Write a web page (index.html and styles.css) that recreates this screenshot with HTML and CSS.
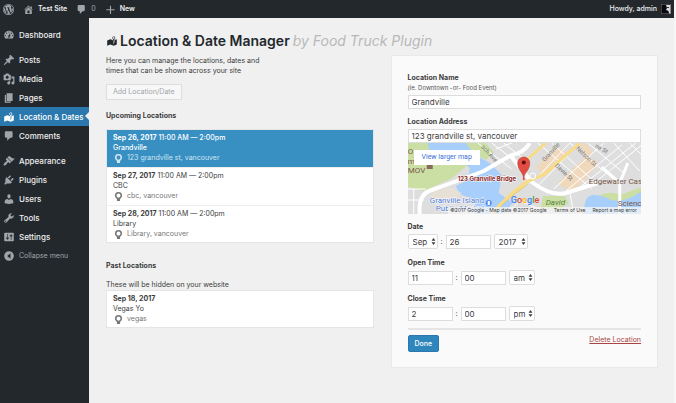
FILE: index.html
```html
<!DOCTYPE html>
<html lang="en">
<head>
<meta charset="utf-8">
<title>Location &amp; Date Manager</title>
<link rel="stylesheet" href="styles.css">
</head>
<body>
<svg class="defs" width="0" height="0" aria-hidden="true">
  <symbol id="i-map" viewBox="0 0 20 20"><path d="M13 13.140l1.170-5.940c.79-.43 1.330-1.250 1.330-2.200 0-1.380-1.120-2.500-2.500-2.500S10.500 3.620 10.500 5c0 .95.54 1.770 1.330 2.200zm0-9.640c.83 0 1.500.67 1.500 1.500s-.67 1.500-1.500 1.500-1.500-.67-1.500-1.500.67-1.500 1.500-1.500zm1.720 4.800L18 6.970v9L13.120 18 7 15.970l-5 2v-9l5-2 4.270 1.410 1.730 7.300z"/></symbol>
  <symbol id="i-comment" viewBox="0 0 20 20"><path d="M5 2h9c1.100 0 2 .9 2 2v7c0 1.100-.9 2-2 2h-2l-5 5v-5H5c-1.100 0-2-.9-2-2V4c0-1.100.9-2 2-2z"/></symbol>
  <symbol id="i-pin" viewBox="0 0 20 20"><path fill-rule="evenodd" d="M10 0a8 8 0 0 1 8 7.500c0 3.500-2.500 5-4.500 8V20h-7v-4.500C4.500 12.500 2 11 2 7.500A8 8 0 0 1 10 0zm0 3.500a4.500 4.500 0 1 0 0 9 4.500 4.500 0 0 0 0-9z"/></symbol>
  <symbol id="i-sort" viewBox="0 0 6 10"><path d="M3 0l2.800 4H.2zM3 10L.2 6h5.600z"/></symbol>
</svg>

<header class="adminbar">
  <a href="#" class="bar-item" aria-label="WordPress"><svg viewBox="0 0 20 20"><path fill-rule="evenodd" d="M10 0a10 10 0 1 1 0 20 10 10 0 0 1 0-20zm0 1.200a8.800 8.800 0 1 0 0 17.600 8.800 8.800 0 0 0 0-17.600z"/><path d="M2.600 6.500l4 11A8 8 0 0 1 2.600 6.500zM3.500 5a8 8 0 0 1 12-1c-1.500.5-1.500 2-.5 3.500 1 1.600 1 3-.1 5.700L13.800 16 10.700 6.500h1.300v-.8H6.800v.8h1.300l1.300 3.600-1.800 5.600L4.500 6.500h1.300v-.8H3.200zM10.100 11l2.500 6.800a8 8 0 0 1-4.800.1zM17 6.500a8 8 0 0 1-3 10.300l2.400-7z"/></svg></a>
  <a href="#" class="bar-item"><svg viewBox="0 0 20 20"><path d="M16 8.500l1.530 1.530-1.060 1.060L10 4.600l-6.470 6.490-1.060-1.060L10 2.500l4 4v-2h2v4zm-6-2.460l6 5.990V18H4v-5.970zM12 17v-5H8v5h4z"/></svg>Test Site</a>
  <a href="#" class="bar-item muted" aria-label="0 comments"><svg><use href="#i-comment"/></svg>0</a>
  <a href="#" class="bar-item"><svg viewBox="0 0 20 20"><path d="M9 3h2v6.500h6.500v2H11V18H9v-6.500H2.500v-2H9z"/></svg>New</a>
  <a href="#" class="bar-item account">Howdy, admin<svg class="avatar" viewBox="0 0 10 10"><path fill="#77777f" d="M0 0h10v10H0z"/><path fill="#08080c" d="M.5.5h9v9h-9z"/><path fill="#d9d9df" d="M5 1h4.500v8.500H8L7.500 7 5 6l1-2z"/><path fill="#333" d="M6 3h2v1H6z"/></svg></a>
</header>

<div class="shell">
  <nav class="sidebar" aria-label="Main menu">
    <ul>
      <li><a href="#"><svg viewBox="0 0 20 20"><path d="M3.760 16h12.480c1.100-1.370 1.760-3.110 1.760-5 0-4.420-3.580-8-8-8s-8 3.580-8 8c0 1.890.66 3.630 1.760 5zM10 4c.55 0 1 .45 1 1s-.45 1-1 1-1-.45-1-1 .45-1 1-1zM6 6c.55 0 1 .45 1 1s-.45 1-1 1-1-.45-1-1 .45-1 1-1zm8 0c.55 0 1 .45 1 1s-.45 1-1 1-1-.45-1-1 .45-1 1-1zm-5.370 5.550L12 7v6c0 1.100-.9 2-2 2s-2-.9-2-2c0-.57.24-1.080.63-1.450zM4 10c.55 0 1 .45 1 1s-.45 1-1 1-1-.45-1-1 .45-1 1-1zm12 0c.55 0 1 .45 1 1s-.45 1-1 1-1-.45-1-1 .45-1 1-1zm-5 3c0-.55-.45-1-1-1s-1 .45-1 1 .45 1 1 1 1-.45 1-1z" fill-rule="evenodd"/></svg>Dashboard</a></li>
    </ul>
    <ul>
      <li><a href="#"><svg viewBox="0 0 20 20"><path d="M10.440 3.020l1.820-1.820 6.360 6.350-1.830 1.820c-1.050-.68-2.480-.57-3.410.36l-.75.75c-.92.93-1.040 2.350-.35 3.410l-1.830 1.820-2.410-2.410-2.800 2.790c-.42.42-3.380 2.710-3.800 2.290s1.860-3.390 2.280-3.810l2.790-2.790L4.100 9.360l1.830-1.820c1.050.69 2.480.57 3.400-.36l.75-.75c.93-.92 1.050-2.350.36-3.410z"/></svg>Posts</a></li>
      <li><a href="#"><svg viewBox="0 0 20 20"><path fill-rule="evenodd" d="M13 11V4c0-.55-.45-1-1-1h-1.670L9 1H5L3.670 3H2c-.55 0-1 .45-1 1v7c0 .55.45 1 1 1h10c.55 0 1-.45 1-1zM7 4.500c1.380 0 2.500 1.120 2.500 2.500S8.380 9.500 7 9.500 4.500 8.380 4.500 7 5.620 4.500 7 4.500zM14 6h5v10.500c0 1.380-1.120 2.500-2.500 2.500S14 17.880 14 16.500s1.120-2.500 2.500-2.500c.17 0 .34.020.5.050V9h-3V6zm-4 8.050V13h2v3.500c0 1.380-1.120 2.500-2.500 2.500S7 17.880 7 16.500 8.120 14 9.500 14c.17 0 .34.020.5.050z"/></svg>Media</a></li>
      <li><a href="#"><svg viewBox="0 0 20 20"><path d="M6 15V2h10v13H6zm-1 1h8v2H3V5h2v11z"/></svg>Pages</a></li>
      <li><a href="#" class="current" aria-current="page"><svg><use href="#i-map"/></svg>Location &amp; Dates</a></li>
      <li><a href="#"><svg><use href="#i-comment"/></svg>Comments</a></li>
    </ul>
    <ul>
      <li><a href="#"><svg viewBox="0 0 20 20"><path d="M14.480 11.060L7.410 3.990l1.500-1.500c.5-.56 2.300-.47 3.510.32 1.210.8 1.430 1.280 2.910 2.100 1.180.64 2.450 1.260 4.450.85zm-.71.71L6.700 4.700 4.930 6.470c-.39.39-.39 1.020 0 1.410l1.060 1.060c.39.39.39 1.030 0 1.420-.6.6-1.430 1.110-2.210 1.690-.35.26-.7.53-1.010.84C1.430 14.230.4 16.080 1.400 17.070c.99 1 2.840-.03 4.180-1.360.31-.31.58-.66.85-1.020.57-.78 1.080-1.610 1.690-2.210.39-.39 1.020-.39 1.410 0l1.060 1.060c.39.39 1.020.39 1.410 0z"/></svg>Appearance</a></li>
      <li><a href="#"><svg viewBox="0 0 20 20"><path d="M13.110 4.360L9.870 7.600 8 5.730l3.240-3.240c.35-.34 1.050-.2 1.560.32.52.51.66 1.210.31 1.550zm-8 1.770l.91-1.120 9.010 9.010-1.190.84c-.71.71-2.630 1.160-3.820 1.160H6.140L4.900 17.260c-.59.59-1.540.59-2.120 0-.59-.58-.59-1.530 0-2.120l1.240-1.240v-3.880c0-1.130.4-3.190 1.090-3.890zm7.260 3.970l3.240-3.240c.34-.35 1.040-.21 1.550.31.52.51.66 1.210.31 1.550l-3.240 3.250z"/></svg>Plugins</a></li>
      <li><a href="#"><svg viewBox="0 0 20 20"><path d="M10 9.250c-2.270 0-2.730-3.440-2.730-3.440C7 4.020 7.820 2 9.970 2c2.160 0 2.980 2.020 2.710 3.810 0 0-.41 3.440-2.680 3.440zm0 2.570L12.720 10c2.390 0 4.520 2.330 4.520 4.530v2.490s-3.650 1.130-7.240 1.130c-3.650 0-7.240-1.130-7.240-1.130v-2.490c0-2.250 1.940-4.480 4.470-4.480z"/></svg>Users</a></li>
      <li><a href="#"><svg viewBox="0 0 20 20"><path fill-rule="evenodd" d="M16.680 9.770c-1.340 1.340-3.300 1.670-4.950.99l-5.410 6.520c-.99.99-2.590.99-3.580 0s-.99-2.590 0-3.570l6.520-5.420c-.68-1.650-.35-3.610.99-4.950 1.280-1.280 3.120-1.620 4.720-1.060l-2.890 2.890 2.820 2.820 2.860-2.870c.53 1.580.18 3.390-1.080 4.650zM3.810 16.210c.4.390 1.040.39 1.430 0 .4-.4.4-1.040 0-1.430-.39-.4-1.030-.4-1.430 0-.39.39-.39 1.030 0 1.430z"/></svg>Tools</a></li>
      <li><a href="#"><svg viewBox="0 0 20 20"><path fill-rule="evenodd" d="M18 16V4c0-.55-.45-1-1-1H3c-.55 0-1 .45-1 1v12c0 .55.45 1 1 1h14c.55 0 1-.45 1-1zM8 11h1c.55 0 1 .45 1 1s-.45 1-1 1H8v1.500c0 .28-.22.5-.5.5s-.5-.22-.5-.5V13H6c-.55 0-1-.45-1-1s.45-1 1-1h1V5.500c0-.28.22-.5.5-.5s.5.22.5.5V11zm5-2h-1c-.55 0-1-.45-1-1s.45-1 1-1h1V5.500c0-.28.22-.5.5-.5s.5.22.5.5V7h1c.55 0 1 .45 1 1s-.45 1-1 1h-1v5.500c0 .28-.22.5-.5.5s-.5-.22-.5-.5V9z"/></svg>Settings</a></li>
      <li><button type="button" class="collapse"><svg viewBox="0 0 20 20"><path fill-rule="evenodd" d="M10 2a8 8 0 1 1 0 16 8 8 0 0 1 0-16zm2.500 3.500L7 10l5.500 4.500z"/></svg>Collapse menu</button></li>
    </ul>
  </nav>

  <main class="content">
    <h1><svg><use href="#i-map"/></svg>Location &amp; Date Manager <em>by Food Truck Plugin</em></h1>
    <div class="columns">
      <section class="listing">
        <p class="intro">Here you can manage the locations, dates and times that can be shown across your site</p>
        <button type="button" class="add">Add Location/Date</button>
        <h2>Upcoming Locations</h2>
        <ul class="locations">
          <li class="selected"><div><b>Sep 26, 2017</b> 11:00 AM — 2:00pm</div><div>Grandville</div><div class="place"><svg><use href="#i-pin"/></svg>123 grandville st, vancouver</div></li>
          <li><div><b>Sep 27, 2017</b> 11:00 AM — 2:00pm</div><div>CBC</div><div class="place"><svg><use href="#i-pin"/></svg>cbc, vancouver</div></li>
          <li><div><b>Sep 28, 2017</b> 11:00 AM — 2:00pm</div><div>Library</div><div class="place"><svg><use href="#i-pin"/></svg>Library, vancouver</div></li>
        </ul>
        <h2 class="past">Past Locations</h2>
        <p>These will be hidden on your website</p>
        <ul class="locations">
          <li><div><b>Sep 18, 2017</b></div><div>Vegas Yo</div><div class="place"><svg><use href="#i-pin"/></svg>vegas</div></li>
        </ul>
      </section>

      <form class="panel">
        <label for="name">Location Name</label>
        <small>(ie. Downtown -or- Food Event)</small>
        <input id="name" type="text" value="Grandville">
        <label for="address" class="gap">Location Address</label>
        <input id="address" type="text" value="123 grandville st, vancouver">
        <div class="map">
          <svg class="map-art" viewBox="0 0 234 71" preserveAspectRatio="xMidYMid slice" role="img" aria-label="Map of 123 Granville Bridge">
            <path fill="#dedede" d="M0 0h234v71H0z"/>
            <path fill="#cbdfa4" d="M0 0h72l-12 22-17 14L16 48 0 44z"/>
            <path fill="#a8cefb" d="M20 0h42l6 12 14 8 12 12-3 18 14 10-10 11H66l2-14-16-6-4-8 12-6 2-12-12-10-28-6z"/>
            <path fill="#cbdfa4" d="M58 0h20l8 9-8 8-12-7zM135 53h22l4 7-8 6h-20z"/>
            <path fill="#cbdfa4" d="M147 10l6 3-2 7-7-3z"/>
            <path fill="#e6e0d6" d="M24 50l16-6 14 6-10 8H22z"/>
            <path fill="#f0d8bd" d="M128 24l22-20 8 6-22 24zM150 40l30-28 11 9-24 26-9-1zM172 2l6-2 8 10-8 4z"/>
            <path fill="#cbdfa4" d="M190 53q14-6 22-1l22-8v27l-30-4z"/>
            <path fill="#a8cefb" d="M177 71q-2-18 8-19 10 0 18 5 16 3 31-9v23z"/>
            <g fill="none" stroke="#fff">
              <path stroke-width="4" d="M12 71q-2-20 12-24Q66 32 76 28q20-12 28-16 12-2 18-12M104 14l20 25q20 15 34 11l32-10"/>
              <path stroke-width="3" d="M212 71V40l-18-16M212 40l8-20"/>
              <path stroke-width="1" d="M0 46h18M0 57h16M6 46v25M70 0l34 26M84 0l26 20M88 6l16-6M96 0l20 16M130 0l54 46M144 0l44 40M162 0l46 38M180 0l36 30M206 0l26 28M128 36L162 0M130 43L172 0M146 46L196 0M158 48L214 2M170 46L228 0M184 42l50-40M222 0l12 12M104 66l8-8 20 8M162 49l4 22"/>
            </g>
            <path fill="none" stroke="#f7dc85" stroke-width="3" d="M84 71q10-12 22-22l12-10 10-4q12-4 20-14L172 0M118 39l-8 8M120 16L138 0"/>
            <path fill="none" stroke="#e6c96b" stroke-width="1" d="M86 71q10-12 22-21l12-9"/>
            <circle cx="125" cy="33" r="3" fill="#dedede" stroke="#fff"/>
            <g class="street"><text transform="translate(137 19)rotate(-48)">Granville</text><text transform="translate(147 23)rotate(44)">Davie St</text><text transform="translate(168 6)rotate(44)">Nelson St</text><text transform="translate(187 4)rotate(30)">ne St</text><text transform="translate(73 4)rotate(48)">ach Ave</text></g>
            <g class="poi"><text x="0" y="11">O</text><text x="0" y="21">m</text><text x="0" y="30">MOV</text><text x="181" y="41">Edgewater Cas</text><text x="210" y="63">Scienc</text></g>
            <path fill="#8b6a59" d="M19 22l3-2 3 2v4h-6z"/>
            <g class="isle"><text x="22" y="60">Granville Island</text><text x="28" y="68">Public Market</text></g>
            <circle cx="81" cy="60" r="3" fill="#5b8def"/><path fill="#fff" d="M80 58h2v4h-2z"/>
            <text class="district" x="138" y="62">David</text>
            <text class="logo" x="103" y="60"><tspan fill="#4285f4">G</tspan><tspan fill="#ea4335">o</tspan><tspan fill="#fbbc05">o</tspan><tspan fill="#4285f4">g</tspan><tspan fill="#34a853">l</tspan><tspan fill="#ea4335">e</tspan></text>
            <text class="marker-label" x="50" y="38">123 Granville Bridge</text>
            <circle cx="116" cy="36" r="1" fill="#d33"/>
            <path fill="#e44c42" stroke="#b23a30" stroke-width=".6" d="M116 35c-.8-6-6-8-6-15a6 6 0 0 1 12 0c0 7-5.200 9-6 15z"/><circle cx="116" cy="19.500" r="2" fill="#5a110d"/>
          </svg>
          <a href="#" class="larger">View larger map</a>
          <div class="credits"><span>©2017 Google - Map data ©2017 Google</span><a href="#">Terms of Use</a><a href="#">Report a map error</a></div>
        </div>

        <label for="month" class="gap">Date</label>
        <div class="row"><span class="pick"><select id="month"><option>Sep</option></select><svg><use href="#i-sort"/></svg></span><i>:</i><input type="text" value="26" aria-label="Day"><span class="pick year"><select aria-label="Year"><option>2017</option></select><svg><use href="#i-sort"/></svg></span></div>
        <label for="open" class="gap">Open Time</label>
        <div class="row"><input id="open" type="text" value="11"><i>:</i><input type="text" value="00" aria-label="Open minutes"><span class="pick half"><select aria-label="Open am or pm"><option>am</option></select><svg><use href="#i-sort"/></svg></span></div>
        <label for="close" class="gap">Close Time</label>
        <div class="row"><input id="close" type="text" value="2"><i>:</i><input type="text" value="00" aria-label="Close minutes"><span class="pick half"><select aria-label="Close am or pm"><option>pm</option></select><svg><use href="#i-sort"/></svg></span></div>
        <div class="actions"><button type="button" class="done">Done</button><a href="#">Delete Location</a></div>
      </form>
    </div>
  </main>
</div>
</body>
</html>
```

FILE: styles.css
```css
* { box-sizing: border-box; }
body {
  margin: 0;
  min-height: 100vh;
  display: flex;
  flex-direction: column;
  background: #f0f0f0;
  border-right: 2px solid #f6f6f6;
  color: #3c3c3c;
  font: 7px/10px Inter, "Liberation Sans", sans-serif;
}
button, input, select { font: inherit; color: inherit; margin: 0; }
ul { list-style: none; margin: 0; padding: 0; }
p, h1, h2 { margin: 0; }
a { color: inherit; text-decoration: none; }
svg { fill: currentColor; flex: none; }
.defs { position: absolute; }

.adminbar {
  display: flex;
  align-items: center;
  height: 18px;
  padding: 0 3px;
  gap: 9px;
  background: #23282d;
  color: #eee;
  font-weight: 600;
}
.bar-item { display: flex; align-items: center; gap: 4px; }
.bar-item svg { width: 11px; height: 11px; color: #a0a5aa; }
.bar-item.muted { color: #a0a5aa; font-weight: 400; }
.bar-item.account { margin-left: auto; font-weight: 500; }
.bar-item .avatar { width: 10px; height: 10px; }

.shell { flex: 1; display: flex; }
.sidebar {
  flex: none;
  width: 89px;
  padding-top: 7px;
  background: #23282d;
  color: #eee;
  font-size: 8px;
  font-weight: 500;
}
.sidebar ul { margin-bottom: 6px; }
.sidebar a, .collapse {
  position: relative;
  display: flex;
  align-items: center;
  gap: 4px;
  width: 100%;
  height: 19px;
  padding: 0 0 0 3px;
  white-space: nowrap;
}
.sidebar svg { width: 12px; height: 12px; color: #a0a5aa; }
.sidebar .current { background: #2a78ad; color: #fff; }
.sidebar .current svg { color: #fff; }
.current::after {
  content: "";
  position: absolute;
  right: 0;
  top: 5px;
  border: 4px solid transparent;
  border-right-color: #f0f0f0;
  border-left: 0;
}
.collapse { border: 0; background: none; color: #a0a5aa; font-size: 7px; font-weight: 400; }

.content { flex: 1; min-width: 0; padding: 13px 16px 0 17px; }
h1 {
  display: flex;
  align-items: center;
  height: 20px;
  color: #23282d;
  font-size: 14px;
  line-height: 20px;
  font-weight: 600;
  white-space: nowrap;
}
h1 svg { width: 12px; height: 12px; margin-right: 2px; }
h1 em { margin-left: 3px; color: #b8b8b8; font-weight: 400; }
.columns {
  display: grid;
  grid-template-columns: 1fr 1fr;
  align-items: start;
  gap: 17px;
  padding-top: 4px;
}
.intro { max-width: 170px; padding-top: 1px; }
.add {
  display: block;
  height: 16px;
  margin-top: 8px;
  padding: 0 6px;
  border: 1px solid #ddd;
  border-radius: 1px;
  background: #f7f7f7;
  color: #a0a5aa;
}
h2 { font-size: 7px; line-height: 10px; font-weight: 700; margin: 11px 0 8px; }
.past { margin: 18px 0 9px; }
.locations { background: #fff; border: 1px solid #e5e5e5; }
.locations li { padding: 3px 6px 4px; }
.locations li:last-child { padding-bottom: 3px; }
.locations li + li { border-top: 1px solid #eee; }
.locations b { font-weight: 700; }
.locations .selected { background: #388fc2; color: #fff; font-weight: 500; }
.locations .place { display: flex; align-items: center; gap: 4px; padding-left: 1px; color: #777; font-weight: 400; }
.place svg { width: 9px; height: 9px; }
.locations .selected .place { color: #cfe5f2; }

.panel {
  padding: 17px 16px 15px;
  background: #fafafa;
  border: 1px solid #e9e9e9;
}
.panel label { display: block; font-weight: 700; }
.panel .gap { margin-top: 8px; }
.panel .row + .gap { margin-top: 9px; }
.panel small { display: block; font-size: 6px; line-height: 10px; color: #555; }
.panel input {
  display: block;
  width: 100%;
  height: 14px;
  margin-top: 2px;
  padding: 0 3px;
  border: 1px solid #ddd;
  background: #fff;
  font-size: 8px;
}
.map { position: relative; overflow: hidden; height: 71px; font-family: Roboto, "Liberation Sans", sans-serif; }
.map-art { display: block; width: 100%; height: 71px; }
.street { font-size: 6px; fill: #777; }
.poi { font-size: 8px; fill: #77594a; }
.isle { font-size: 8px; fill: #4a78d0; stroke: #fff; stroke-width: 1px; paint-order: stroke; }
.district { font-size: 8px; font-style: italic; fill: #55803f; }
.logo { font-size: 9px; font-weight: 500; }
.marker-label { font-family: Inter, sans-serif; font-size: 6px; font-weight: 700; fill: #8d1f1f; stroke: #fff; stroke-width: 1px; paint-order: stroke; }
.larger {
  position: absolute;
  left: 6px;
  top: 7px;
  padding: 2px 8px 3px;
  background: #fff;
  color: #3a6fd8;
  font-size: 7px;
}
.credits {
  position: absolute;
  right: 0;
  bottom: 0;
  display: flex;
  gap: 7px;
  padding: 0 4px 0 2px;
  background: rgba(245, 245, 245, 0.75);
  font-family: Inter, sans-serif;
  font-size: 5px;
  line-height: 7px;
  white-space: nowrap;
}
.row { display: flex; align-items: center; height: 15px; margin-top: 2px; }
.row input { width: 45px; margin: 0; }
.row i { width: 8px; text-align: center; font-style: normal; }
.pick { position: relative; display: block; width: 30px; height: 15px; }
.pick select {
  display: block;
  appearance: none;
  width: 100%;
  height: 15px;
  padding: 0 0 0 4px;
  border: 1px solid #ddd;
  border-radius: 2px;
  background: #fff;
  font-size: 8px;
}
.pick svg { position: absolute; right: 2px; top: 4px; width: 5px; height: 7px; pointer-events: none; }
.pick.year { width: 34px; margin-left: 3px; }
.pick.half { width: 26px; margin-left: 3px; }
.actions {
  display: flex;
  justify-content: space-between;
  align-items: flex-start;
  margin-top: 7px;
  padding-top: 5px;
  border-top: 2px solid #e5e5e5;
}
.actions a { color: #a84444; text-decoration: underline; }
.done {
  height: 17px;
  padding: 0 6px;
  border: 1px solid #2a78ad;
  border-radius: 2px;
  background: #2f86bd;
  color: #fff;
  font-weight: 500;
}
```
